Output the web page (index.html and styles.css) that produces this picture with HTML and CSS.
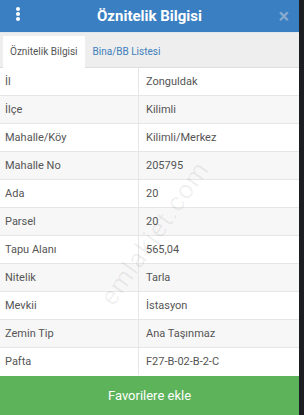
FILE: index.html
```html
<!DOCTYPE html>
<html lang="tr">
<head>
  <meta charset="UTF-8">
  <meta name="viewport" content="width=device-width, initial-scale=1.0">
  <title>Öznitelik Bilgisi</title>
  <link rel="stylesheet" href="styles.css">
</head>
<body>
  <div class="panel">
    <div class="panel-header">
      <span class="menu-dots"><i></i><i></i><i></i></span>
      <h1>Öznitelik Bilgisi</h1>
      <span class="close">&times;</span>
    </div>

    <div class="tabs">
      <div class="tab active">Öznitelik Bilgisi</div>
      <div class="tab">Bina/BB Listesi</div>
    </div>

    <div class="table-wrap">
      <table class="info-table">
        <tr><td>İl</td><td>Zonguldak</td></tr>
        <tr><td>İlçe</td><td>Kilimli</td></tr>
        <tr><td>Mahalle/Köy</td><td>Kilimli/Merkez</td></tr>
        <tr><td>Mahalle No</td><td>205795</td></tr>
        <tr><td>Ada</td><td>20</td></tr>
        <tr><td>Parsel</td><td>20</td></tr>
        <tr><td>Tapu Alanı</td><td>565,04</td></tr>
        <tr><td>Nitelik</td><td>Tarla</td></tr>
        <tr><td>Mevkii</td><td>İstasyon</td></tr>
        <tr><td>Zemin Tip</td><td>Ana Taşınmaz</td></tr>
        <tr><td>Pafta</td><td>F27-B-02-B-2-C</td></tr>
      </table>
      <div class="watermark">emlakjet.com</div>
    </div>

    <button class="fav-btn">Favorilere ekle</button>
  </div>
</body>
</html>
```

FILE: styles.css
```css
body {
  margin: 0;
  background-color: #1b1d20;
  font-family: Roboto, "Noto Sans", sans-serif;
  color: #555;
}
.panel {
  width: 299px;
  height: 415px;
  background-color: #fff;
  display: flex;
  flex-direction: column;
  overflow: hidden;
}
.panel-header {
  height: 32px;
  background-color: #3a7fc2;
  display: flex;
  align-items: center;
  justify-content: center;
  position: relative;
  border-bottom: 1px solid #dfe8f0;
}
.panel-header h1 {
  margin: 0;
  font-size: 15px;
  font-weight: bold;
  color: #fff;
}
.menu-dots {
  position: absolute;
  left: 16px;
  top: 7px;
  display: flex;
  flex-direction: column;
  gap: 1px;
}
.menu-dots i {
  width: 4px;
  height: 4px;
  border-radius: 50%;
  background-color: #fff;
}
.close {
  position: absolute;
  right: 10px;
  top: 4px;
  font-size: 20px;
  font-weight: bold;
  color: #86a9cd;
}
.tabs {
  height: 34px;
  background-color: #eee;
  display: flex;
  align-items: flex-end;
  padding-left: 3px;
  border-bottom: 1px solid #ddd;
  font-size: 10px;
}
.tab {
  height: 31px;
  line-height: 31px;
  padding: 0 7px;
  color: #3d7fbb;
}
.tab.active {
  background-color: #fff;
  color: #555;
  margin-bottom: -1px;
  height: 32px;
}
.tab + .tab {
  padding-left: 8px;
}
.table-wrap {
  position: relative;
  flex: 1;
}
.info-table {
  width: 100%;
  border-collapse: collapse;
  font-size: 11px;
}
.info-table td {
  height: 27px;
  padding: 0 5px;
  border-top: 1px solid #e6e6e6;
}
.info-table tr:first-child td {
  border-top: none;
}
.info-table td:first-child {
  width: 128px;
  border-right: 1px solid #e6e6e6;
}
.info-table td:last-child {
  padding-left: 7px;
}
.info-table tr:nth-child(even) td {
  background-color: #f7f7f7;
}
.watermark {
  position: absolute;
  left: 70px;
  top: 150px;
  transform: rotate(-55deg);
  font-size: 26px;
  color: rgba(0, 0, 0, 0.06);
  letter-spacing: 1px;
  pointer-events: none;
}
.fav-btn {
  height: 39px;
  border: none;
  background-color: #5cb35a;
  color: #fff;
  font-family: Roboto, "Noto Sans", sans-serif;
  font-size: 13px;
}
```
